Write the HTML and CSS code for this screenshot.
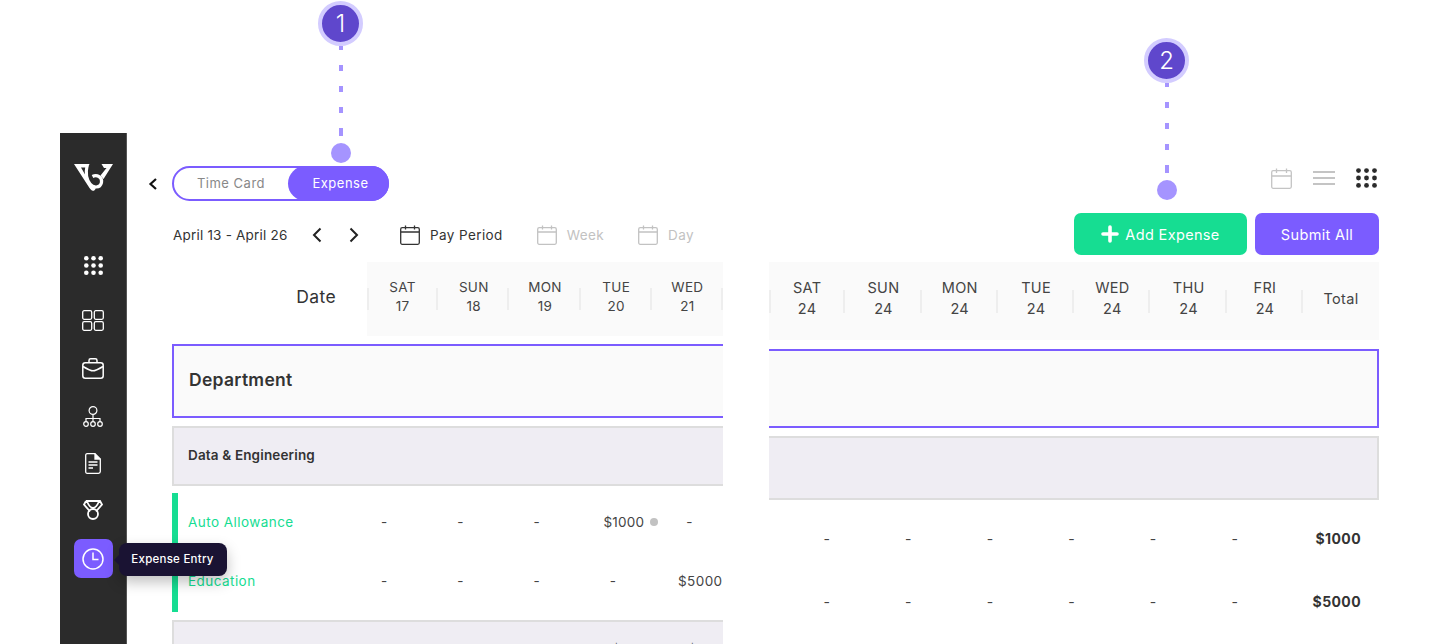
FILE: index.html
```html
<!DOCTYPE html>
<html lang="en">
<head>
    <meta charset="UTF-8">
    <meta name="viewport" content="width=device-width, initial-scale=1.0">
    <title>Expense Entry</title>
    <link rel="stylesheet" href="styles.css">
</head>
<body>
    <div class="page">
        <!-- Sidebar -->
        <nav class="sidebar">
            <svg class="logo" width="39" height="28" viewBox="0 0 39 28">
                <path d="M0 1H15.500L14 4.500H7L16.500 21C18 23.500 20 25 22 25.500L20 27.800C18 27.800 17 27 15.500 25Z" fill="#fff"/>
                <path d="M13 3C11.500 10 12.500 16.500 16 21C19 25 26 25.500 27.500 19.500C28.500 14.500 23 11 18.500 13.500" fill="none" stroke="#fff" stroke-width="3.200"/>
                <path d="M27.500 1H39L29.500 16L26.500 12.500L32.500 5H30Z" fill="#fff"/>
            </svg>
            <svg class="nav-icon nav-apps" width="19" height="19" viewBox="0 0 19 19" fill="#fff">
                <circle cx="2.300" cy="2.300" r="2.300"/><circle cx="9.500" cy="2.300" r="2.300"/><circle cx="16.700" cy="2.300" r="2.300"/>
                <circle cx="2.300" cy="9.500" r="2.300"/><circle cx="9.500" cy="9.500" r="2.300"/><circle cx="16.700" cy="9.500" r="2.300"/>
                <circle cx="2.300" cy="16.700" r="2.300"/><circle cx="9.500" cy="16.700" r="2.300"/><circle cx="16.700" cy="16.700" r="2.300"/>
            </svg>
            <svg class="nav-icon nav-grid" width="22" height="21" viewBox="0 0 22 21" fill="none" stroke="#fff" stroke-width="1.300">
                <rect x="0.700" y="0.700" width="9" height="8.600" rx="1.500"/><rect x="12.300" y="0.700" width="9" height="8.600" rx="1.500"/>
                <rect x="0.700" y="11.700" width="9" height="8.600" rx="1.500"/><rect x="12.300" y="11.700" width="9" height="8.600" rx="1.500"/>
            </svg>
            <svg class="nav-icon nav-case" width="22" height="21" viewBox="0 0 22 21" fill="none" stroke="#fff" stroke-width="1.500">
                <rect x="0.800" y="4.800" width="20.400" height="15.400" rx="2.500"/>
                <path d="M7 4.500V2.500C7 1.500 7.700 0.800 8.700 0.800H13.300C14.300 0.800 15 1.500 15 2.500V4.500"/>
                <path d="M1 8.500C6 11.500 8.500 12.800 11 12.800C13.500 12.800 16 11.500 21 8.500"/>
            </svg>
            <svg class="nav-icon nav-org" width="20" height="21" viewBox="0 0 20 21" fill="none" stroke="#fff" stroke-width="1.200">
                <circle cx="10" cy="4.500" r="3.900"/>
                <path d="M10 8.500V15.500M3 15.500V12.500H17V15.500"/>
                <circle cx="3" cy="18" r="2.300"/><circle cx="10" cy="18" r="2.300"/><circle cx="17" cy="18" r="2.300"/>
            </svg>
            <svg class="nav-icon nav-doc" width="16" height="21" viewBox="0 0 16 21" fill="none" stroke="#fff" stroke-width="1.300">
                <path d="M2.200 0.700H10L15.300 6V18.500C15.300 19.600 14.500 20.300 13.500 20.300H2.200C1.200 20.300 0.700 19.600 0.700 18.500V2.500C0.700 1.400 1.200 0.700 2.200 0.700Z"/>
                <path d="M10 0.700V6H15.300" fill="#fff"/>
                <path d="M3.500 9H12.500M3.500 12H12.500M3.500 15H8"/>
            </svg>
            <svg class="nav-icon nav-medal" width="20" height="20" viewBox="0 0 20 20" fill="none" stroke="#fff" stroke-width="1.800">
                <path d="M3 1H17L19 4.500L13 11.500M3 1L1 4.500L7 11.500M4 1.500C6 6 8 8 10 8C12 8 14 6 16 1.500"/>
                <circle cx="10" cy="14" r="5"/>
            </svg>
            <a class="nav-active">
                <svg width="22" height="22" viewBox="0 0 22 22" fill="none" stroke="#fff" stroke-width="1.500">
                    <circle cx="11" cy="11" r="10"/>
                    <path d="M11 4.500V11.500H16.500"/>
                </svg>
                <span class="tooltip">Expense Entry</span>
            </a>
        </nav>

        <!-- Time card table, left part -->
        <section class="panel panel-left">
            <div class="tab-row">
                <svg class="back" width="10" height="12" viewBox="0 0 10 12" fill="none" stroke="#111" stroke-width="2.200"><path d="M8 1L2.500 6L8 11"/></svg>
                <div class="tabs">
                    <span class="tab">Time Card</span>
                    <span class="tab tab-active">Expense</span>
                </div>
            </div>
            <div class="date-row">
                <span class="date-range">April 13 - April 26</span>
                <svg class="nav-prev" width="10" height="16" viewBox="0 0 10 16" fill="none" stroke="#222" stroke-width="2"><path d="M8.500 1.500L2 8L8.500 14.500"/></svg>
                <svg class="nav-next" width="10" height="16" viewBox="0 0 10 16" fill="none" stroke="#222" stroke-width="2"><path d="M1.500 1.500L8 8L1.500 14.500"/></svg>
                <span class="view view-on">
                    <svg width="20" height="20" viewBox="0 0 20 20" fill="none" stroke="currentColor" stroke-width="1.300"><rect x="0.700" y="2.700" width="18.600" height="16.600" rx="1.500"/><path d="M1 7H19M5.500 0.500V4.500M14.500 0.500V4.500"/></svg>
                    Pay Period
                </span>
                <span class="view">
                    <svg width="20" height="20" viewBox="0 0 20 20" fill="none" stroke="currentColor" stroke-width="1.300"><rect x="0.700" y="2.700" width="18.600" height="16.600" rx="1.500"/><path d="M1 7H19M5.500 0.500V4.500M14.500 0.500V4.500"/></svg>
                    Week
                </span>
                <span class="view">
                    <svg width="20" height="20" viewBox="0 0 20 20" fill="none" stroke="currentColor" stroke-width="1.300"><rect x="0.700" y="2.700" width="18.600" height="16.600" rx="1.500"/><path d="M1 7H19M5.500 0.500V4.500M14.500 0.500V4.500"/></svg>
                    Day
                </span>
            </div>
            <div class="head-row">
                <div class="date-head">Date</div>
                <div class="days">
                    <div class="day">SAT<br>17</div>
                    <div class="day">SUN<br>18</div>
                    <div class="day">MON<br>19</div>
                    <div class="day">TUE<br>20</div>
                    <div class="day">WED<br>21</div>
                </div>
            </div>
            <div class="dept">Department</div>
            <div class="group">Data &amp; Engineering</div>
            <div class="rows">
                <div class="row">
                    <span class="row-name">Auto Allowance</span>
                    <span>-</span><span>-</span><span>-</span>
                    <span class="flagged">$1000<i class="flag"></i></span>
                    <span>-</span>
                </div>
                <div class="row">
                    <span class="row-name">Education</span>
                    <span>-</span><span>-</span><span>-</span><span>-</span>
                    <span class="wide-val">$5000</span>
                </div>
            </div>
            <div class="group group-totals">
                <span class="total-a">$1000</span>
                <span class="total-b">$5000</span>
            </div>
        </section>

        <!-- Right part -->
        <section class="panel panel-right">
            <div class="view-icons">
                <svg width="21" height="21" viewBox="0 0 21 21" fill="none" stroke="#c4c4c4" stroke-width="1.300"><rect x="0.700" y="2.700" width="19.600" height="17.600" rx="1.500"/><path d="M1 8H20M5.500 0.500V5M15.500 0.500V5"/></svg>
                <svg width="22" height="22" viewBox="0 0 22 22" fill="none" stroke="#c4c4c4" stroke-width="2"><path d="M0 5H22M0 11H22M0 17H22"/></svg>
                <svg width="21" height="20" viewBox="0 0 21 20" fill="#2b2b2b">
                    <circle cx="2.500" cy="2.600" r="2.400"/><circle cx="10.500" cy="2.600" r="2.400"/><circle cx="18.500" cy="2.600" r="2.400"/>
                    <circle cx="2.500" cy="10" r="2.400"/><circle cx="10.500" cy="10" r="2.400"/><circle cx="18.500" cy="10" r="2.400"/>
                    <circle cx="2.500" cy="17.400" r="2.400"/><circle cx="10.500" cy="17.400" r="2.400"/><circle cx="18.500" cy="17.400" r="2.400"/>
                </svg>
            </div>
            <div class="actions">
                <button class="btn btn-add">
                    <svg width="18" height="18" viewBox="0 0 18 18" fill="none" stroke="#fff" stroke-width="3.600" stroke-linecap="round"><path d="M9 2V16M2 9H16"/></svg>
                    Add Expense
                </button>
                <button class="btn btn-submit">Submit All</button>
            </div>
            <div class="days days-wide">
                <div class="day">SAT<br>24</div>
                <div class="day">SUN<br>24</div>
                <div class="day">MON<br>24</div>
                <div class="day">TUE<br>24</div>
                <div class="day">WED<br>24</div>
                <div class="day">THU<br>24</div>
                <div class="day">FRI<br>24</div>
                <div class="day-total">Total</div>
            </div>
            <div class="dept dept-right"></div>
            <div class="group group-right"></div>
            <div class="row row-right">
                <span>-</span><span>-</span><span>-</span><span>-</span><span>-</span><span>-</span>
                <b>$1000</b>
            </div>
            <div class="row row-right">
                <span>-</span><span>-</span><span>-</span><span>-</span><span>-</span><span>-</span>
                <b>$5000</b>
            </div>
        </section>

        <!-- Callouts -->
        <div class="marker marker-one">
            <span class="marker-num">1</span>
            <span class="marker-line"></span>
            <span class="marker-dot"></span>
        </div>
        <div class="marker marker-two">
            <span class="marker-num">2</span>
            <span class="marker-line"></span>
            <span class="marker-dot"></span>
        </div>
    </div>
</body>
</html>
```
FILE: styles.css
```css
:root {
    --purple: #7b5cff;
    --purple-dark: #5f47cc;
    --purple-soft: #a594ff;
    --green: #16dd92;
    --text: #333333;
    --head-bg: #fafafa;
    --band-bg: #efedf3;
    --band-line: #dddddd;
}

* {
    margin: 0;
    padding: 0;
    box-sizing: border-box;
}

body {
    font-family: 'Inter', 'Liberation Sans', sans-serif;
    background: #ffffff;
    color: var(--text);
    overflow: hidden;
}

.page {
    position: relative;
    display: flex;
    align-items: flex-start;
    height: 644px;
    padding-left: 60px;
    overflow: hidden;
}

/* Sidebar */
.sidebar {
    position: relative;
    z-index: 2;
    flex: 0 0 67px;
    height: 511px;
    margin-top: 133px;
    background: #2b2b2b;
    border-right: 1px solid #555555;
    display: flex;
    flex-direction: column;
    align-items: center;
    padding-top: 30px;
}

.logo {
    display: block;
}

.nav-icon {
    display: block;
}

.nav-apps { margin-top: 65px; }
.nav-grid { margin-top: 35px; }
.nav-case { margin-top: 27px; }
.nav-org { margin-top: 27px; }
.nav-doc { margin-top: 26px; }
.nav-medal { margin-top: 26px; }

.nav-active {
    position: relative;
    display: flex;
    align-items: center;
    justify-content: center;
    width: 39px;
    height: 39px;
    margin-top: 19px;
    background: var(--purple);
    border-radius: 7px;
}

.tooltip {
    position: absolute;
    left: 45px;
    top: 4px;
    width: 108px;
    height: 33px;
    line-height: 33px;
    text-align: center;
    background: #1a1333;
    color: #ffffff;
    font-size: 11.500px;
    font-weight: 500;
    letter-spacing: 0.25px;
    border-radius: 8px;
    box-shadow: 0 6px 14px rgba(0, 0, 0, 0.25);
}

.tooltip::before {
    content: '';
    position: absolute;
    left: -5px;
    top: 12px;
    border-top: 5px solid transparent;
    border-bottom: 5px solid transparent;
    border-right: 5px solid #1a1333;
}

/* Panels */
.panel {
    overflow: hidden;
    height: 644px;
}

.panel-left {
    flex: 0 0 578px;
    margin-left: 18px;
    padding: 166px 0 0 27px;
}

.panel-right {
    flex: 0 0 610px;
    margin-left: 46px;
    padding-top: 167px;
}

.tab-row {
    display: flex;
    align-items: center;
    height: 35px;
}

.back {
    flex: 0 0 10px;
    margin-left: -24px;
    margin-right: 14px;
}

.tabs {
    display: flex;
    width: 217px;
    height: 35px;
    border: 2px solid var(--purple);
    border-radius: 18px;
}

.tab {
    flex: 1;
    text-align: center;
    font-size: 13px;
    letter-spacing: 0.5px;
    line-height: 31px;
    color: #888888;
}

.tab-active {
    flex: 0 0 101px;
    margin: -2px -2px -2px 0;
    padding-left: 4px;
    line-height: 35px;
    border-radius: 18px;
    background: var(--purple);
    color: #ffffff;
}

.date-row {
    display: flex;
    align-items: center;
    height: 40px;
    margin-top: 14px;
    font-size: 13.500px;
    letter-spacing: 0.4px;
}

.date-range {
    flex: 0 0 115px;
    margin-left: 1px;
    letter-spacing: 0.2px;
    white-space: nowrap;
}

.nav-prev { margin-left: 24px; }
.nav-next { margin-left: 27px; }

.view {
    display: flex;
    align-items: center;
    gap: 10px;
    margin-left: 34px;
    color: #c2c2c2;
}

.view-on {
    margin-left: 41px;
    color: var(--text);
}

.head-row {
    display: flex;
    height: 74px;
    margin-top: 7px;
}

.date-head {
    flex: 0 0 195px;
    padding: 24px 31px 0 0;
    text-align: right;
    font-size: 17.500px;
    letter-spacing: 0.4px;
    line-height: 22px;
}

.days {
    flex: 1;
    display: flex;
    background: var(--head-bg);
}

.day {
    position: relative;
    flex: 0 0 71.200px;
    padding-top: 16px;
    text-align: center;
    font-size: 13.500px;
    letter-spacing: 0.3px;
    line-height: 19px;
    color: #444444;
}

.day::after,
.day:first-child::before {
    content: '';
    position: absolute;
    right: 0;
    top: 26px;
    width: 2px;
    height: 22px;
    background: #eeeeee;
}

.day:first-child::before {
    right: auto;
    left: 0;
}

.days-wide {
    height: 78px;
    margin-top: 7px;
}

.days-wide .day {
    flex: 0 0 76.300px;
    padding-top: 15px;
    font-size: 14.500px;
    line-height: 21px;
}

.days-wide .day::after,
.days-wide .day:first-child::before {
    top: 28px;
    height: 23px;
}

.day-total {
    flex: 1;
    padding-top: 26px;
    text-align: center;
    font-size: 14.500px;
    letter-spacing: 0.3px;
    line-height: 21px;
    color: #444444;
}

.dept {
    height: 74px;
    margin-top: 8px;
    padding-left: 15px;
    background: var(--head-bg);
    border: solid var(--purple);
    border-width: 2px 0 2px 2px;
    font-size: 17.500px;
    font-weight: 600;
    letter-spacing: 0.3px;
    line-height: 68px;
}

.dept-right {
    height: 79px;
    margin-top: 9px;
    padding: 0;
    border-width: 2px 2px 2px 0;
}

.group {
    height: 60px;
    margin-top: 8px;
    padding-left: 14px;
    background: var(--band-bg);
    border: solid var(--band-line);
    border-width: 2px 0 2px 2px;
    font-size: 13.500px;
    font-weight: 600;
    letter-spacing: 0.15px;
    line-height: 55px;
}

.group-right {
    height: 64px;
    padding: 0;
    border-width: 2px 2px 2px 0;
}

.group-totals {
    position: relative;
    font-weight: 400;
    color: #555555;
}

.total-a,
.total-b {
    position: absolute;
    top: 0;
}

.total-a { left: 438px; }
.total-b { left: 514px; }

/* Rows */
.rows {
    height: 119px;
    margin-top: 7px;
    border-left: 6px solid var(--green);
}

.row {
    display: grid;
    grid-template-columns: 168px repeat(5, 76.300px);
    align-items: center;
    height: 58.500px;
    font-size: 13.500px;
    letter-spacing: 0.2px;
    text-align: center;
    color: #444444;
}

.row-name {
    padding-left: 10px;
    letter-spacing: 0.45px;
    text-align: left;
    color: var(--green);
}

.flagged {
    position: relative;
    text-align: right;
    padding-right: 7px;
}

.flag {
    position: absolute;
    right: -7px;
    top: 4px;
    width: 8px;
    height: 8px;
    border-radius: 50%;
    background: #c2c2c2;
}

.wide-val {
    text-align: right;
    padding-right: 5px;
    letter-spacing: 0.4px;
}

.view-icons {
    display: flex;
    justify-content: flex-end;
    align-items: center;
    gap: 21px;
    height: 22px;
    padding-right: 2px;
}

.actions {
    display: flex;
    justify-content: flex-end;
    gap: 8px;
    margin-top: 24px;
}

.btn {
    display: flex;
    align-items: center;
    justify-content: center;
    gap: 6px;
    height: 42px;
    border: none;
    border-radius: 7px;
    color: #ffffff;
    font-family: inherit;
    font-size: 14.500px;
    letter-spacing: 0.35px;
}

.btn-add {
    width: 173px;
    background: var(--green);
}

.btn-submit {
    width: 124px;
    background: var(--purple);
}

.row-right {
    grid-template-columns: repeat(6, 81.600px) 1fr;
    height: 63px;
    padding: 0 18px 0 17px;
    font-size: 14px;
}

.group-right + .row-right {
    margin-top: 7px;
}

.row-right b {
    text-align: right;
    color: var(--text);
    font-weight: 700;
    letter-spacing: 0.4px;
}

/* Callouts */
.marker {
    position: absolute;
    z-index: 3;
    display: flex;
    flex-direction: column;
    align-items: center;
    width: 45px;
}

.marker-one { left: 318px; top: 1px; }
.marker-two { left: 1144px; top: 38px; }

.marker-num {
    flex: 0 0 45px;
    width: 45px;
    text-align: center;
    font-size: 24px;
    font-weight: 300;
    line-height: 37px;
    color: #ffffff;
    background: var(--purple-dark);
    border: 4px solid #d3ccff;
    border-radius: 50%;
}

.marker-line {
    width: 4px;
    height: 90px;
    background: repeating-linear-gradient(to bottom, var(--purple-soft) 0 6px, transparent 6px 21px);
    background-position: 0 -2px;
}

.marker-dot {
    width: 20px;
    height: 20px;
    margin-top: 7px;
    border-radius: 50%;
    background: var(--purple-soft);
}
```
